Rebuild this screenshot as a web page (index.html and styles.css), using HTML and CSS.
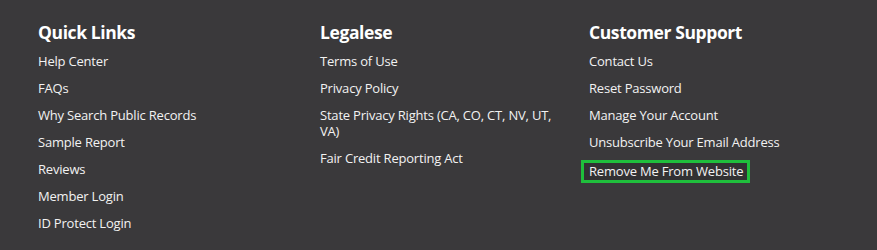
FILE: index.html
```html
<!DOCTYPE html>
<html lang="en">
<head>
<meta charset="utf-8">
<link rel="stylesheet" href="styles.css">
</head>
<body>
<footer class="footer">
  <div class="col col-quick">
    <h3 class="col-title">Quick Links</h3>
    <ul class="links">
      <li><a href="#">Help Center</a></li>
      <li><a href="#">FAQs</a></li>
      <li><a href="#">Why Search Public Records</a></li>
      <li><a href="#">Sample Report</a></li>
      <li><a href="#">Reviews</a></li>
      <li><a href="#">Member Login</a></li>
      <li><a href="#">ID Protect Login</a></li>
    </ul>
  </div>
  <div class="col col-legal">
    <h3 class="col-title">Legalese</h3>
    <ul class="links">
      <li><a href="#">Terms of Use</a></li>
      <li><a href="#">Privacy Policy</a></li>
      <li><a href="#">State Privacy Rights (CA, CO, CT, NV, UT, VA)</a></li>
      <li><a href="#">Fair Credit Reporting Act</a></li>
    </ul>
  </div>
  <div class="col col-support">
    <h3 class="col-title">Customer Support</h3>
    <ul class="links">
      <li><a href="#">Contact Us</a></li>
      <li><a href="#">Reset Password</a></li>
      <li><a href="#">Manage Your Account</a></li>
      <li><a href="#">Unsubscribe Your Email Address</a></li>
      <li><a href="#" class="highlight">Remove Me From Website</a></li>
    </ul>
  </div>
</footer>
</body>
</html>
```

FILE: styles.css
```css
html, body {
  margin: 0;
  padding: 0;
  background: #3a393b;
}
body {
  font-family: "Open Sans", "Liberation Sans", sans-serif;
  color: #ffffff;
  width: 877px;
  height: 250px;
  overflow: hidden;
}
.footer {
  display: grid;
  grid-template-columns: 262px 249px 1fr;
  column-gap: 20px;
  padding: 20px 0 0 38px;
}
.col-title {
  margin: 0 0 9px 0;
  font-size: 17.5px;
  font-weight: 700;
  line-height: 24px;
  letter-spacing: -0.4px;
}
.links {
  list-style: none;
  margin: 0;
  padding: 0;
  display: flex;
  flex-direction: column;
  gap: 11px;
}
.links li {
  font-size: 13px;
  line-height: 16px;
  letter-spacing: -0.2px;
}
.links a {
  color: #f2f2f2;
  text-decoration: none;
}
.highlight {
  display: inline-block;
  border: 3px solid #1fbf3c;
  background: #323133;
  padding: 0 4px 0 5px;
  margin: -1px 0 0 -8px;
  line-height: 17px;
}
```
